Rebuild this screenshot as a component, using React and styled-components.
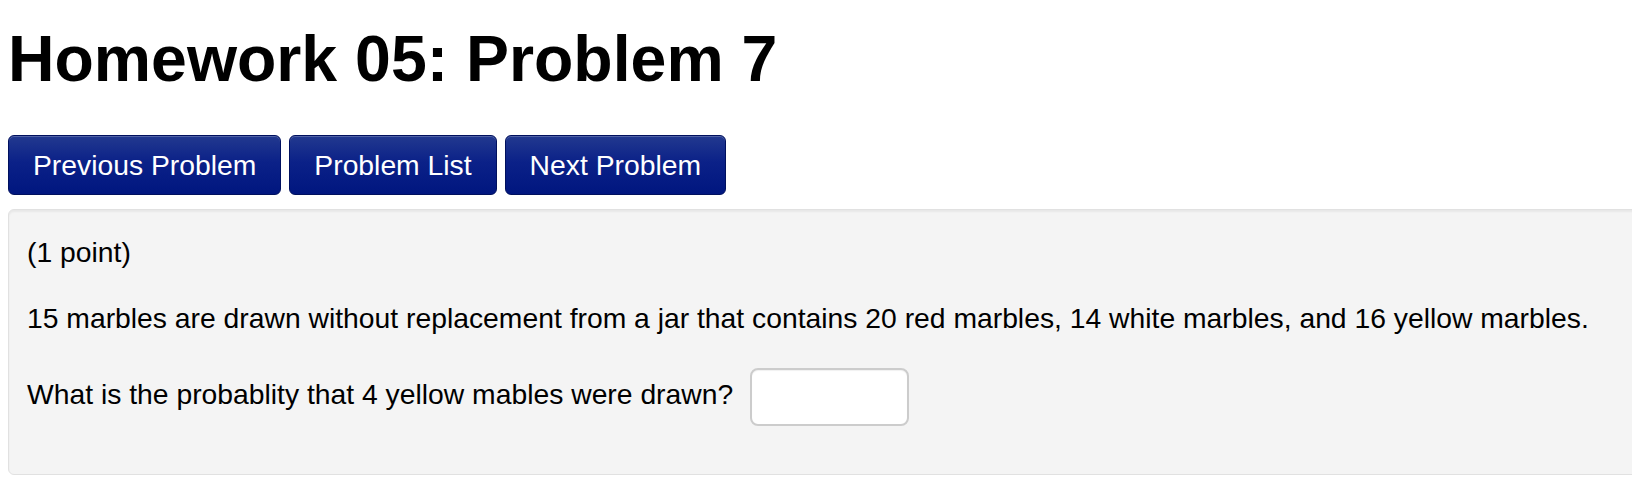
import React from 'react';
import styled, { createGlobalStyle } from 'styled-components';

const GlobalStyle = createGlobalStyle`
  html, body {
    margin: 0;
    padding: 0;
    background: #ffffff;
    overflow-x: hidden;
  }

  body {
    font-family: "Liberation Sans", Arial, Helvetica, sans-serif;
    color: #000000;
  }
`;

const Page = styled.div`
  padding-left: 8px;
`;

const Title = styled.h1`
  margin: 24px 0 41px;
  font-size: 64.4px;
  line-height: 70px;
  font-weight: 700;
`;

const NavBar = styled.div`
  display: flex;
  gap: 8px;
  margin-bottom: 14px;
`;

const NavButton = styled.button`
  height: 60px;
  padding: 9px 24px;
  border: 1px solid #00105e;
  border-radius: 6px;
  background: linear-gradient(to bottom, #22398f 0%, #0b2188 45%, #00167f 100%);
  box-shadow: inset 0 1px 0 rgba(255, 255, 255, 0.22);
  color: #ffffff;
  font-family: inherit;
  font-size: 28.3px;
  line-height: 40px;
  white-space: nowrap;
  cursor: pointer;
`;

const ProblemPanel = styled.div`
  margin-right: -40px;
  padding: 22px 18px 22px;
  background: #f4f4f4;
  border: 1px solid #e1e1e1;
  border-radius: 6px;
  box-shadow: inset 0 2px 2px rgba(0, 0, 0, 0.05);
`;

const Paragraph = styled.p`
  margin: 0 0 26px;
  font-size: 28.3px;
  line-height: 40px;
`;

const QuestionRow = styled(Paragraph)`
  margin-top: 30px;
`;

const AnswerInput = styled.input`
  box-sizing: border-box;
  width: 159px;
  height: 58px;
  margin-left: 9px;
  padding: 4px 12px;
  vertical-align: middle;
  background: #ffffff;
  border: 2px solid #cccccc;
  border-radius: 8px;
  box-shadow: inset 0 1px 1px rgba(0, 0, 0, 0.06);
  font-family: inherit;
  font-size: 28px;
  outline: none;
`;

const App = () => (
  <Page>
    <GlobalStyle />
    <Title>Homework 05: Problem 7</Title>
    <NavBar>
      <NavButton>Previous Problem</NavButton>
      <NavButton>Problem List</NavButton>
      <NavButton>Next Problem</NavButton>
    </NavBar>
    <ProblemPanel>
      <Paragraph>(1 point)</Paragraph>
      <Paragraph>
        15 marbles are drawn without replacement from a jar that contains 20 red
        marbles, 14 white marbles, and 16 yellow marbles.
      </Paragraph>
      <QuestionRow>
        What is the probablity that 4 yellow mables were drawn?{' '}
        <AnswerInput type="text" aria-label="answer" />
      </QuestionRow>
    </ProblemPanel>
  </Page>
);

export default App;
